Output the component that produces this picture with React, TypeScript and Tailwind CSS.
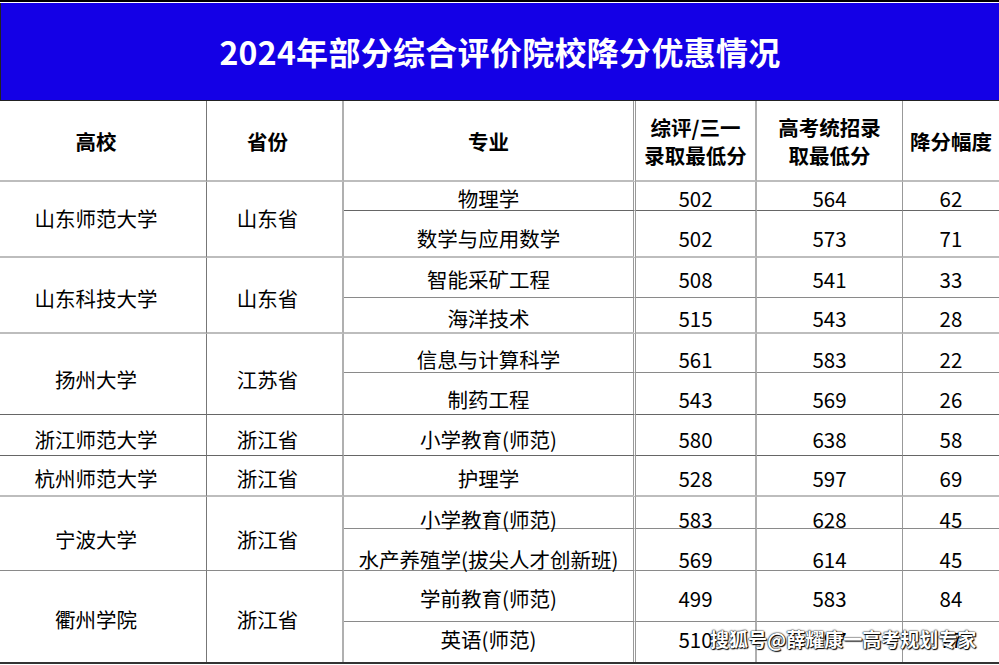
import React from 'react';

interface MajorRow {
  major: string;
  zp: string;
  gk: string;
  diff: string;
  pad: string;
  line: string;
}

interface School {
  name: string;
  prov: string;
  pad: string;
  span: string;
  line: string;
  rows: MajorRow[];
}

const thin = 'border-b border-b-[#8a8a8a]';
const dark = 'border-b border-b-[#666]';
const light = 'border-b-2 border-b-[#bdbdbd]';

const schools: School[] = [
  {
    name: '山东师范大学', prov: '山东省', pad: 'pb-[6px]', span: 'row-span-2', line: light,
    rows: [
      { major: '物理学', zp: '502', gk: '564', diff: '62', pad: '', line: dark },
      { major: '数学与应用数学', zp: '502', gk: '573', diff: '71', pad: 'pt-[5px]', line: light },
    ],
  },
  {
    name: '山东科技大学', prov: '山东省', pad: 'pt-[2px]', span: 'row-span-2', line: light,
    rows: [
      { major: '智能采矿工程', zp: '508', gk: '541', diff: '33', pad: 'pb-[2px]', line: thin },
      { major: '海洋技术', zp: '515', gk: '543', diff: '28', pad: 'pt-[2px]', line: light },
    ],
  },
  {
    name: '扬州大学', prov: '江苏省', pad: 'pt-[5px]', span: 'row-span-2', line: dark,
    rows: [
      { major: '信息与计算科学', zp: '561', gk: '583', diff: '22', pad: 'pt-[7px]', line: thin },
      { major: '制药工程', zp: '543', gk: '569', diff: '26', pad: 'pt-[6px]', line: dark },
    ],
  },
  {
    name: '浙江师范大学', prov: '浙江省', pad: 'pt-[3px]', span: '', line: dark,
    rows: [{ major: '小学教育(师范)', zp: '580', gk: '638', diff: '58', pad: 'pt-[3px]', line: dark }],
  },
  {
    name: '杭州师范大学', prov: '浙江省', pad: '', span: '', line: light,
    rows: [{ major: '护理学', zp: '528', gk: '597', diff: '69', pad: '', line: light }],
  },
  {
    name: '宁波大学', prov: '浙江省', pad: 'pt-[6px]', span: 'row-span-2', line: thin,
    rows: [
      { major: '小学教育(师范)', zp: '583', gk: '628', diff: '45', pad: 'pt-[8px]', line: thin },
      { major: '水产养殖学(拔尖人才创新班)', zp: '569', gk: '614', diff: '45', pad: 'pt-[14px]', line: thin },
    ],
  },
  {
    name: '衢州学院', prov: '浙江省', pad: '', span: 'row-span-2', line: '',
    rows: [
      { major: '学前教育(师范)', zp: '499', gk: '583', diff: '84', pad: '', line: thin },
      { major: '英语(师范)', zp: '510', gk: '597', diff: '77', pad: 'pb-[10px]', line: '' },
    ],
  },
];

const cell = 'flex items-center justify-center text-center';
const body = 'mt-[4px]';
const c1 = 'border-r border-r-[#777] pr-[14px]';
const c2 = 'border-r-2 border-r-[#b0b0b0] pr-[14px]';
const c3 = 'border-r-[3px] border-double border-r-[#999]';
const c4 = 'border-r-2 border-r-[#b0b0b0]';

export default function App() {
  return (
    <div
      className="relative w-[999px] h-[665px] overflow-hidden bg-white text-black"
      style={{ fontFamily: '"Noto Sans CJK SC", "Noto Sans", sans-serif' }}
    >
      <div className="border-t-2 border-black pt-px bg-white">
        <div className="h-[98px] bg-[#1400e6] border-l border-l-[#222] border-b border-b-[#222] flex items-center justify-center">
          <h1 className="text-white font-bold text-[32px] tracking-[0.3px] leading-none pb-[2px]">
            2024年部分综合评价院校降分优惠情况
          </h1>
        </div>
      </div>

      <div className="grid grid-cols-[207px_137px_292px_121px_146px_96px] grid-rows-[81px_29px_47px_40px_36px_39px_42px_41px_41px_32px_42px_51px_40px] text-[20.5px] leading-[28px] border-b-2 border-b-[#333]">
        <div className={`${cell} ${c1} ${light} font-bold`}>高校</div>
        <div className={`${cell} ${c2} ${light} font-bold`}>省份</div>
        <div className={`${cell} ${c3} ${light} font-bold`}>专业</div>
        <div className={`${cell} ${c4} ${light} font-bold flex-col`}>
          <span>综评/三一</span>
          <span>录取最低分</span>
        </div>
        <div className={`${cell} border-r border-r-[#999] ${light} font-bold flex-col`}>
          <span>高考统招录</span>
          <span>取最低分</span>
        </div>
        <div className={`${cell} ${light} font-bold`}>降分幅度</div>

        {schools.map((s) => (
          <React.Fragment key={s.name}>
            <div className={`${cell} ${c1} ${s.span} ${s.line} ${s.pad}`}>
              <span className={body}>{s.name}</span>
            </div>
            <div className={`${cell} ${c2} ${s.span} ${s.line} ${s.pad}`}>
              <span className={body}>{s.prov}</span>
            </div>
            {s.rows.map((r) => (
              <React.Fragment key={r.major + r.zp}>
                <div className={`${cell} ${c3} ${r.line} ${r.pad} whitespace-nowrap`}>
                  <span className={body}>{r.major}</span>
                </div>
                <div className={`${cell} ${c4} ${r.line} ${r.pad}`}>
                  <span className={body}>{r.zp}</span>
                </div>
                <div className={`${cell} border-r border-r-[#999] ${r.line} ${r.pad}`}>
                  <span className={body}>{r.gk}</span>
                </div>
                <div className={`${cell} ${r.line} ${r.pad}`}>
                  <span className={body}>{r.diff}</span>
                </div>
              </React.Fragment>
            ))}
          </React.Fragment>
        ))}
      </div>

      <div className="absolute left-[710px] top-[625px] text-[19px] leading-[28px] font-bold text-white whitespace-nowrap [text-shadow:0_0_2px_#000,0_0_1px_#000,1px_1px_1px_#000]">
        搜狐号@薛耀康一高考规划专家
      </div>
    </div>
  );
}
